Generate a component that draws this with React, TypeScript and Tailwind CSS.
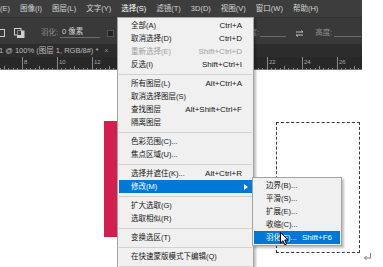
import React from "react";

const font = "font-['Liberation_Sans','Noto_Sans_CJK_SC',sans-serif]";

const menuBar = ["编辑(E)", "图像(I)", "图层(L)", "文字(Y)", "选择(S)", "滤镜(T)", "3D(D)", "视图(V)", "窗口(W)", "帮助(H)"];

type Entry =
  | { sep: true }
  | { label: string; shortcut?: string; disabled?: boolean; active?: boolean; arrow?: boolean; sep?: false };

const selectMenu: Entry[] = [
  { label: "全部(A)", shortcut: "Ctrl+A" },
  { label: "取消选择(D)", shortcut: "Ctrl+D" },
  { label: "重新选择(E)", shortcut: "Shift+Ctrl+D", disabled: true },
  { label: "反选(I)", shortcut: "Shift+Ctrl+I" },
  { sep: true },
  { label: "所有图层(L)", shortcut: "Alt+Ctrl+A" },
  { label: "取消选择图层(S)" },
  { label: "查找图层", shortcut: "Alt+Shift+Ctrl+F" },
  { label: "隔离图层" },
  { sep: true },
  { label: "色彩范围(C)..." },
  { label: "焦点区域(U)..." },
  { sep: true },
  { label: "选择并遮住(K)...", shortcut: "Alt+Ctrl+R" },
  { label: "修改(M)", active: true, arrow: true },
  { sep: true },
  { label: "扩大选取(G)" },
  { label: "选取相似(R)" },
  { sep: true },
  { label: "变换选区(T)" },
  { sep: true },
  { label: "在快速蒙版模式下编辑(Q)" },
  { sep: true },
];

const modifyMenu = [
  { label: "边界(B)..." },
  { label: "平滑(S)..." },
  { label: "扩展(E)..." },
  { label: "收缩(C)..." },
  { label: "羽化(F)...", shortcut: "Shift+F6", active: true },
];

function MenuRow({ e }: { e: Entry }) {
  if (e.sep) {
    return (
      <div className="flex h-[6px] items-center">
        <div className="h-px flex-1 bg-[#d2d2d2]" />
      </div>
    );
  }
  const tone = e.active ? "bg-[#0078d7] text-white" : e.disabled ? "text-[#9e9e9e]" : "text-[#161616]";
  return (
    <div className={`flex h-[13px] items-center pl-[12px] ${e.arrow ? "pr-[4px]" : "pr-[10px]"} ${tone}`}>
      <span className="flex-1 text-[7.5px] leading-none">{e.label}</span>
      {e.shortcut && <span className="text-[8px] leading-none">{e.shortcut}</span>}
      {e.arrow && (
        <svg width="4" height="6" viewBox="0 0 4 6">
          <path d="M0 0 L4 3 L0 6 Z" fill="currentColor" />
        </svg>
      )}
    </div>
  );
}

function Ruler() {
  const ticks = [];
  for (let i = -16; i < 90; i++) {
    const x = 22 + i * 4.375;
    const major = i % 8 === 0;
    const mid = i % 4 === 0;
    ticks.push(
      <line key={i} x1={x} x2={x} y1={major ? 0 : mid ? 9 : 11} y2={13} stroke="#8a8a8a" strokeWidth="1" />
    );
  }
  // labels 14-20 sit under the open menu
  const labels = [
    { n: 8, x: 24 },
    { n: 10, x: 59 },
    { n: 12, x: 94 },
    { n: 22, x: 269 },
    { n: 24, x: 304 },
    { n: 26, x: 339 },
  ];
  return (
    <div className="relative h-[13px] border-b border-[#6a6a6a] bg-[#282828]">
      <svg width="362" height="13" className="absolute left-0 top-0" shapeRendering="crispEdges">
        {ticks}
      </svg>
      {labels.map((l) => (
        <span key={l.n} className="absolute top-[2px] text-[6px] leading-none text-[#a5a5a5]" style={{ left: l.x }}>
          {l.n}
        </span>
      ))}
    </div>
  );
}

export default function App() {
  return (
    <div className={`relative h-[267px] w-[383px] overflow-hidden bg-white ${font}`}>
      <div className="flex h-full w-[362px] flex-col">
        {/* menu bar */}
        <div className="flex h-[17px] items-center overflow-hidden bg-[#3d3d3d] text-[7.5px] leading-none text-[#d4d4d4]">
          <div className="-ml-[15px] flex gap-[10px]">
            {menuBar.map((m) => (
              <span key={m} className={m === "选择(S)" ? "text-white" : ""}>
                {m}
              </span>
            ))}
          </div>
        </div>

        {/* options bar */}
        <div className="relative flex h-[27px] items-center border-t border-[#333] bg-[#393939] pt-[4px] text-[7.5px] leading-none">
          <svg width="8" height="9" viewBox="0 0 8 9" className="ml-[-2px]">
            <rect x="0.5" y="0.5" width="6" height="7" fill="none" stroke="#cfcfcf" />
          </svg>
          <svg width="11" height="10" viewBox="0 0 11 10" className="ml-[8px]">
            <rect x="0.5" y="0.5" width="6.5" height="6.5" fill="none" stroke="#cfcfcf" />
            <rect x="3.5" y="3" width="6.5" height="6.5" fill="#cfcfcf" stroke="#cfcfcf" />
            <rect x="3.5" y="3" width="3.5" height="4" fill="#393939" />
          </svg>
          <span className="ml-[16px] text-[#8d8d8d]">羽化:</span>
          <span className="ml-[2px] flex w-[40px] items-center border-b border-[#6b6b6b] pb-[1px] text-[#d0d0d0]">
            <span className="ml-[2px]">0 像素</span>
          </span>
          <span className="ml-[7px] h-[7px] w-[7px] border border-[#555] bg-[#222]" />
          <span className="ml-[128px] text-[#8d8d8d]">宽度:</span>
          <span className="mb-[7px] ml-[1px] w-[26px] self-end border-b border-[#6b6b6b]" />
          <svg width="9" height="7" viewBox="0 0 9 7" className="ml-[9px]">
            <path d="M1 2 H8 M6 0.5 L8 2 M8 5 H1 M3 6.5 L1 5" stroke="#bdbdbd" fill="none" strokeWidth="1" />
          </svg>
          <span className="ml-[11px] text-[#8d8d8d]">高度:</span>
          <span className="mb-[7px] ml-[2px] w-[27px] self-end border-b border-[#6b6b6b]" />
        </div>

        {/* document tab */}
        <div className="flex h-[13px] items-center overflow-hidden bg-[#2c2c2c] text-[7.5px] leading-none text-[#bcbcbc]">
          <span className="ml-[-26px] whitespace-nowrap">未标题-1 @ 100% (图层 1, RGB/8#) *</span>
          <span className="ml-[6px] text-[#8a8a8a]">×</span>
        </div>

        <Ruler />

        {/* canvas */}
        <div className="relative flex-1 bg-white">
          <div className="absolute left-[104px] top-[51px] h-[116px] w-[24px] bg-[#d21f4f]" />
          <div className="absolute left-[276px] top-[52px] h-[131px] w-[84px] border border-dashed border-[#3a3a3a]" />
        </div>
      </div>

      {/* select menu */}
      <div className="absolute left-[117px] top-[17px] w-[137px] border border-[#a3a3a3] bg-[#f0f0f0] p-[1px] shadow-[2px_2px_2px_rgba(0,0,0,0.25)]">
        {selectMenu.map((e, i) => (
          <MenuRow key={i} e={e} />
        ))}
      </div>

      {/* modify submenu */}
      <div className="absolute left-[252px] top-[177px] w-[90px] border border-[#a3a3a3] bg-[#f0f0f0] p-[1px] shadow-[2px_2px_2px_rgba(0,0,0,0.25)]">
        {modifyMenu.map((e) => (
          <div
            key={e.label}
            className={`flex h-[13px] items-center pl-[12px] pr-[8px] ${e.active ? "bg-[#0078d7] text-white" : "text-[#161616]"}`}
          >
            <span className="flex-1 text-[7.5px] leading-none">{e.label}</span>
            {e.shortcut && <span className="text-[8px] leading-none">{e.shortcut}</span>}
          </div>
        ))}
      </div>

      {/* mouse pointer */}
      <svg width="9" height="14" viewBox="0 0 9 14" className="absolute left-[280px] top-[232px]">
        <path d="M0.5 0.5 L0.5 11 L3 8.7 L4.8 12.8 L6.5 12 L4.8 8 L8 8 Z" fill="#fff" stroke="#000" strokeWidth="1" />
      </svg>

      {/* word paragraph mark */}
      <svg width="9" height="8" viewBox="0 0 9 8" className="absolute left-[363px] top-[253px]">
        <path d="M7.5 0 V5 H1.5 M3.5 3 L1.5 5 L3.5 7" stroke="#7a7a7a" fill="none" strokeWidth="1" />
      </svg>
    </div>
  );
}
